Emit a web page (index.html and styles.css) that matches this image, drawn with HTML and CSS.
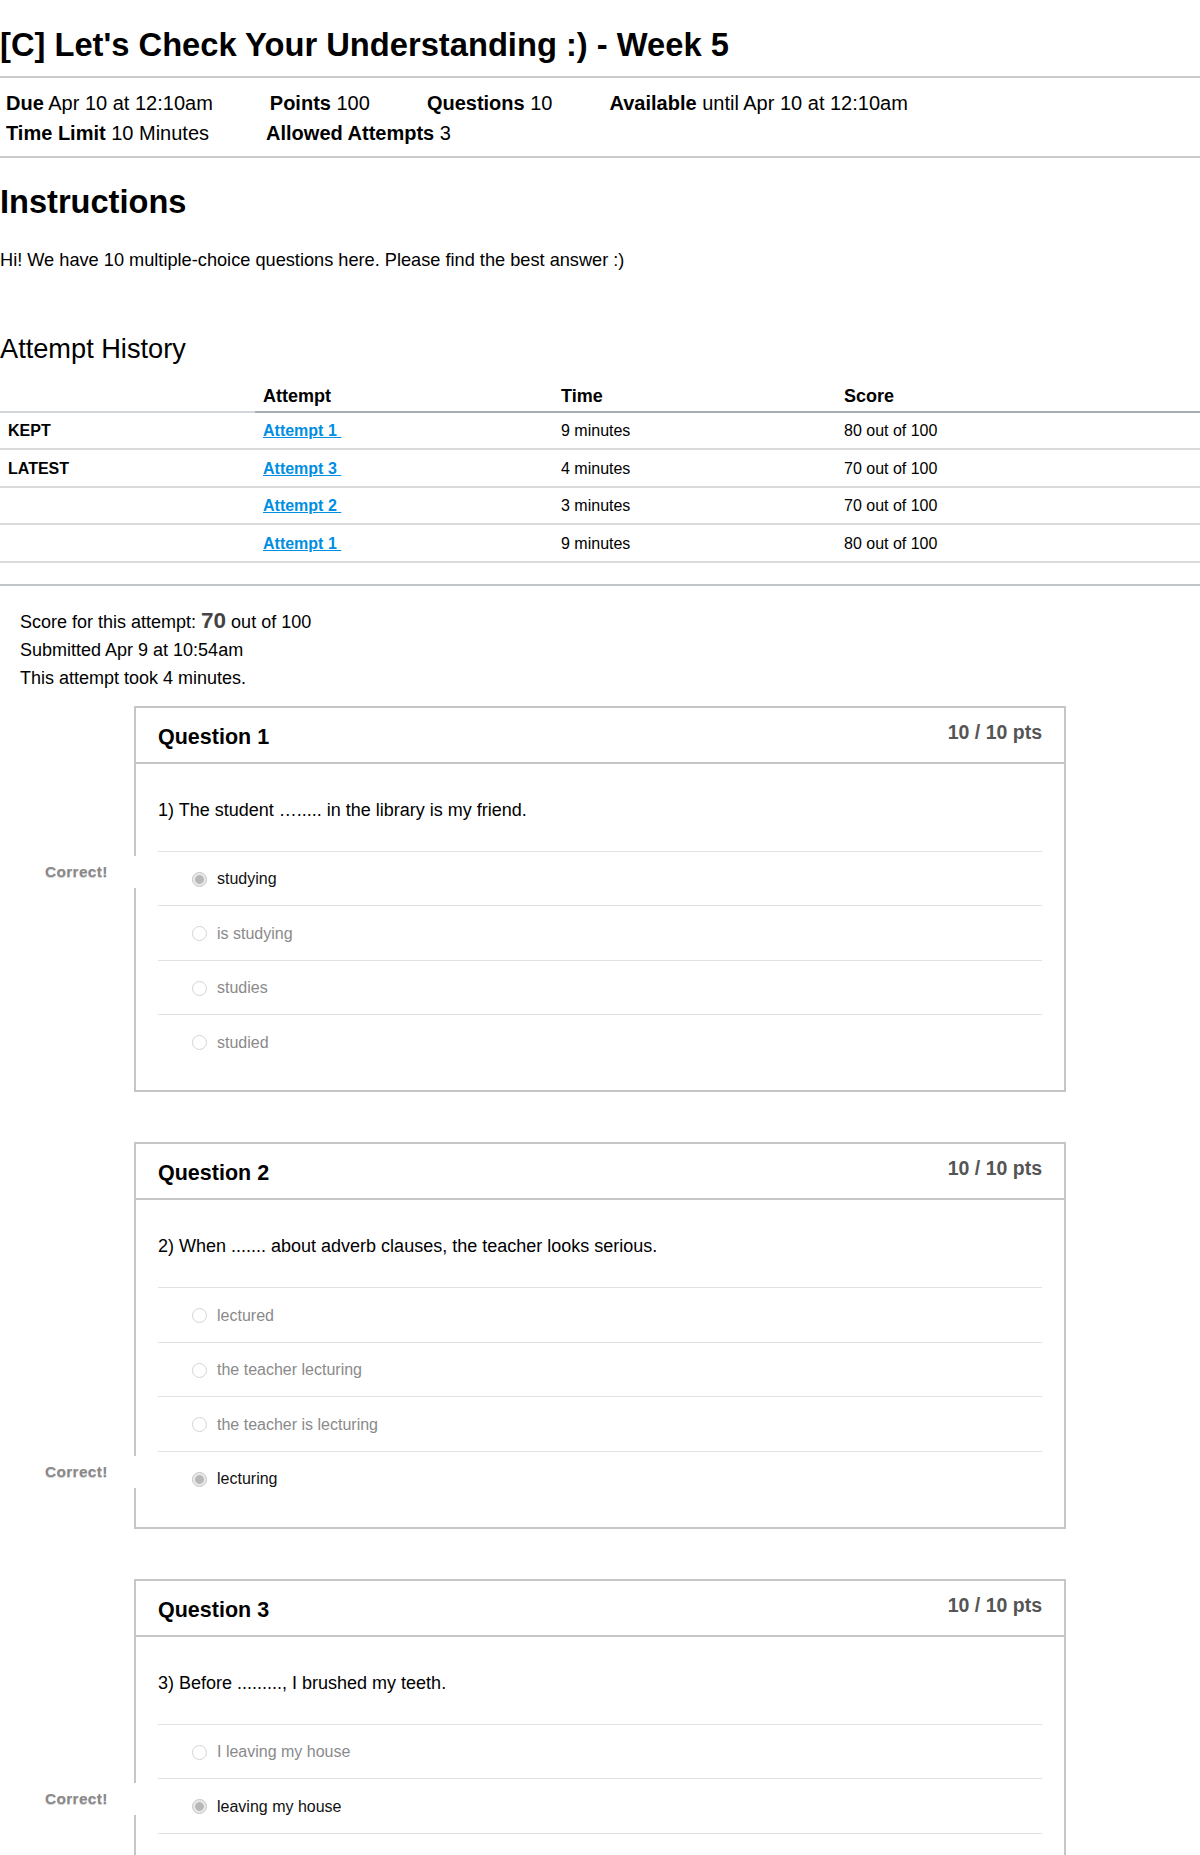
FILE: index.html
```html
<!DOCTYPE html>
<html lang="en">
<head>
<meta charset="utf-8">
<title>[C] Let's Check Your Understanding :) - Week 5</title>
<link rel="stylesheet" href="styles.css">
</head>
<body>
<div class="page">
  <header class="quiz-header">
    <h1 class="quiz-title">[C] Let's Check Your Understanding :) - Week 5</h1>
  </header>

  <div class="meta">
    <div class="meta-row">
      <span class="meta-item"><b>Due</b> Apr 10 at 12:10am</span>
      <span class="meta-item"><b>Points</b> 100</span>
      <span class="meta-item"><b>Questions</b> 10</span>
      <span class="meta-item"><b>Available</b> until Apr 10 at 12:10am</span>
    </div>
    <div class="meta-row">
      <span class="meta-item"><b>Time Limit</b> 10 Minutes</span>
      <span class="meta-item"><b>Allowed Attempts</b> 3</span>
    </div>
  </div>

  <h2 class="section-title">Instructions</h2>
  <p class="instructions">Hi! We have 10 multiple-choice questions here. Please find the best answer :)</p>

  <h3 class="history-title">Attempt History</h3>
  <div class="history">
    <div class="history-head">
      <div class="cell head-blank"></div>
      <div class="cell">Attempt</div>
      <div class="cell">Time</div>
      <div class="cell">Score</div>
    </div>
    <div class="history-row">
      <div class="cell tag">KEPT</div>
      <div class="cell"><a class="attempt-link" href="#">Attempt 1&nbsp;</a></div>
      <div class="cell">9 minutes</div>
      <div class="cell">80 out of 100</div>
    </div>
    <div class="history-row">
      <div class="cell tag">LATEST</div>
      <div class="cell"><a class="attempt-link" href="#">Attempt 3&nbsp;</a></div>
      <div class="cell">4 minutes</div>
      <div class="cell">70 out of 100</div>
    </div>
    <div class="history-row">
      <div class="cell tag"></div>
      <div class="cell"><a class="attempt-link" href="#">Attempt 2&nbsp;</a></div>
      <div class="cell">3 minutes</div>
      <div class="cell">70 out of 100</div>
    </div>
    <div class="history-row">
      <div class="cell tag"></div>
      <div class="cell"><a class="attempt-link" href="#">Attempt 1&nbsp;</a></div>
      <div class="cell">9 minutes</div>
      <div class="cell">80 out of 100</div>
    </div>
  </div>

  <section class="attempt">
    <div class="attempt-summary">
      <div>Score for this attempt: <b class="score-num">70</b> out of 100</div>
      <div>Submitted Apr 9 at 10:54am</div>
      <div>This attempt took 4 minutes.</div>
    </div>

    <div class="question">
      <div class="question-header">
        <span class="question-name">Question 1</span>
        <span class="question-pts">10 / 10 pts</span>
      </div>
      <div class="question-body">
        <p class="question-text">1) The student …..... in the library is my friend.</p>
        <div class="answers">
          <div class="answer selected"><span class="correct-label">Correct!</span><span class="radio checked"></span><span class="answer-text">studying</span></div>
          <div class="answer"><span class="radio"></span><span class="answer-text">is studying</span></div>
          <div class="answer"><span class="radio"></span><span class="answer-text">studies</span></div>
          <div class="answer"><span class="radio"></span><span class="answer-text">studied</span></div>
        </div>
      </div>
    </div>

    <div class="question">
      <div class="question-header">
        <span class="question-name">Question 2</span>
        <span class="question-pts">10 / 10 pts</span>
      </div>
      <div class="question-body">
        <p class="question-text">2) When ....... about adverb clauses, the teacher looks serious.</p>
        <div class="answers">
          <div class="answer"><span class="radio"></span><span class="answer-text">lectured</span></div>
          <div class="answer"><span class="radio"></span><span class="answer-text">the teacher lecturing</span></div>
          <div class="answer"><span class="radio"></span><span class="answer-text">the teacher is lecturing</span></div>
          <div class="answer selected"><span class="correct-label">Correct!</span><span class="radio checked"></span><span class="answer-text">lecturing</span></div>
        </div>
      </div>
    </div>

    <div class="question">
      <div class="question-header">
        <span class="question-name">Question 3</span>
        <span class="question-pts">10 / 10 pts</span>
      </div>
      <div class="question-body">
        <p class="question-text">3) Before ........., I brushed my teeth.</p>
        <div class="answers">
          <div class="answer"><span class="radio"></span><span class="answer-text">I leaving my house</span></div>
          <div class="answer selected"><span class="correct-label">Correct!</span><span class="radio checked"></span><span class="answer-text">leaving my house</span></div>
          <div class="answer answer-empty"></div>
        </div>
      </div>
    </div>
  </section>
</div>
</body>
</html>
```

FILE: styles.css
```css
* {
  box-sizing: border-box;
}

html,
body {
  margin: 0;
  padding: 0;
  background: #ffffff;
}

body {
  font-family: "Liberation Sans", Arial, Helvetica, sans-serif;
  color: #000000;
}

.page {
  width: 1200px;
  height: 1855px;
  overflow: hidden;
}

/* ---------- header ---------- */
.quiz-header {
  padding-bottom: 12px;
  border-bottom: 2px solid #cbcbcb;
}

.quiz-title {
  margin: 0;
  padding-top: 26px;
  font-size: 32.7px;
  line-height: 38px;
  font-weight: bold;
}

.meta {
  padding: 10px 0 8px 6px;
  border-bottom: 2px solid #cbcbcb;
  font-size: 20px;
  line-height: 30px;
}

.meta-row {
  display: flex;
  column-gap: 57px;
  white-space: nowrap;
}

.meta-item b {
  font-weight: bold;
}

/* ---------- instructions ---------- */
.section-title {
  margin: 25px 0 0;
  font-size: 32.6px;
  line-height: 38px;
  font-weight: bold;
}

.instructions {
  margin: 25.5px 0 0;
  font-size: 18.2px;
  line-height: 27px;
}

.history-title {
  margin: 59.5px 0 0;
  font-size: 27.2px;
  line-height: 32px;
  font-weight: normal;
}

/* ---------- attempt history ---------- */
.history-head,
.history-row {
  display: grid;
  grid-template-columns: 255px 298px 283px 1fr;
}

.history-head .cell {
  padding: 19px 0 2.7px 8px;
  font-size: 18px;
  line-height: 24px;
  font-weight: bold;
  border-bottom: 2px solid #a9aeb2;
}

.history-head .head-blank {
  border-bottom-color: #d3d6d8;
}

.history-row .cell {
  height: 37.5px;
  padding: 2px 0 0 8px;
  display: flex;
  align-items: center;
  font-size: 16px;
  border-bottom: 2px solid #d8dadc;
}

.history-row .tag {
  font-weight: bold;
}

.attempt-link {
  color: #008ee2;
  font-weight: bold;
  text-decoration: underline;
}

/* ---------- attempt ---------- */
.attempt {
  margin-top: 21.3px;
  border-top: 2px solid #c2c5c8;
}

.attempt-summary {
  padding: 22px 0 0 20px;
  font-size: 18px;
  line-height: 28px;
}

.score-num {
  font-size: 22.5px;
  line-height: 1;
  color: #444444;
}

/* ---------- question ---------- */
.question {
  width: 932px;
  margin: 14px 0 50px 134px;
  border: 2px solid #c6c6c6;
  background: #ffffff;
}

.question-header {
  display: flex;
  justify-content: space-between;
  align-items: flex-start;
  padding: 16px 22px 12px;
  border-bottom: 2px solid #c6c6c6;
}

.question-name {
  font-size: 21.5px;
  line-height: 26px;
  font-weight: bold;
}

.question-pts {
  margin-top: -4px;
  font-size: 19.5px;
  line-height: 24px;
  font-weight: bold;
  color: #555555;
}

.question-body {
  padding: 33px 22px 21.5px;
}

.question-text {
  margin: 0 0 27px;
  font-size: 18px;
  line-height: 27px;
}

.answer {
  position: relative;
  display: flex;
  align-items: center;
  height: 54.5px;
  padding: 1px 0 0 34px;
  border-top: 1px solid #e2e2e2;
  font-size: 16px;
  color: #8a8a8a;
}

.answer.selected {
  color: #111111;
}

.radio {
  flex: none;
  width: 15px;
  height: 15px;
  margin-right: 10px;
  border: 1px solid #d4d4d4;
  border-radius: 50%;
  background: #ffffff;
}

.radio.checked {
  border-color: #c4c4c4;
  background: radial-gradient(circle, #b8b8b8 0 4px, #e9e9e9 4.7px);
}

.correct-label {
  position: absolute;
  left: -124px;
  top: 4px;
  width: 103px;
  height: 32px;
  padding-left: 11px;
  line-height: 32px;
  background: #ffffff;
  font-size: 15.5px;
  font-weight: bold;
  letter-spacing: 0.3px;
  color: #898989;
  text-shadow: 0 1px 0 #d4d4d4;
}
```
